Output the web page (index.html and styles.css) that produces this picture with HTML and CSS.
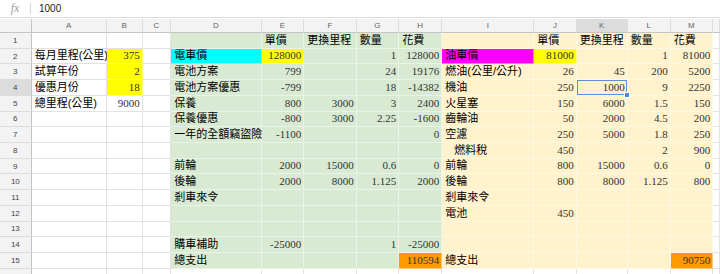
FILE: index.html
```html
<!DOCTYPE html>
<html lang="zh-Hant">
<head>
    <meta charset="UTF-8">
    <meta name="viewport" content="width=device-width, initial-scale=1.0">
    <title>電車 vs 油車 試算</title>
    <link rel="stylesheet" href="styles.css">
</head>
<body>
<div class="formula-bar">
    <span class="fx">fx</span>
    <span class="fx-sep"></span>
    <span class="fx-value">1000</span>
</div>

<div class="sheet">
    <!-- column headers -->
    <div class="row head-row">
        <div class="corner"></div>
        <div class="ch">A</div><div class="ch">B</div><div class="ch">C</div><div class="ch">D</div>
        <div class="ch">E</div><div class="ch">F</div><div class="ch">G</div><div class="ch">H</div>
        <div class="ch">I</div><div class="ch">J</div><div class="ch active">K</div><div class="ch">L</div>
        <div class="ch">M</div><div class="ch"></div>
    </div>

    <div class="row">
        <div class="rh">1</div>
        <div class="c"></div><div class="c"></div><div class="c"></div>
        <div class="c g"></div><div class="c g">單價</div><div class="c g">更換里程</div><div class="c g">數量</div><div class="c g">花費</div>
        <div class="c o"></div><div class="c o">單價</div><div class="c o">更換里程</div><div class="c o">數量</div><div class="c o">花費</div>
        <div class="c"></div>
    </div>

    <div class="row">
        <div class="rh">2</div>
        <div class="c">每月里程(公里)</div><div class="c n y">375</div><div class="c"></div>
        <div class="c cy">電車價</div><div class="c n y">128000</div><div class="c g"></div><div class="c n g">1</div><div class="c n g">128000</div>
        <div class="c mg">油車價</div><div class="c n y">81000</div><div class="c o"></div><div class="c n o">1</div><div class="c n o">81000</div>
        <div class="c"></div>
    </div>

    <div class="row">
        <div class="rh">3</div>
        <div class="c">試算年份</div><div class="c n y">2</div><div class="c"></div>
        <div class="c g">電池方案</div><div class="c n g">799</div><div class="c g"></div><div class="c n g">24</div><div class="c n g">19176</div>
        <div class="c o">燃油(公里/公升)</div><div class="c n o">26</div><div class="c n o">45</div><div class="c n o">200</div><div class="c n o">5200</div>
        <div class="c"></div>
    </div>

    <div class="row">
        <div class="rh active">4</div>
        <div class="c">優惠月份</div><div class="c n y">18</div><div class="c"></div>
        <div class="c g">電池方案優惠</div><div class="c n g">-799</div><div class="c g"></div><div class="c n g">18</div><div class="c n g">-14382</div>
        <div class="c o">機油</div><div class="c n o">250</div><div class="c n o sel">1000</div><div class="c n o">9</div><div class="c n o">2250</div>
        <div class="c"></div>
    </div>

    <div class="row">
        <div class="rh">5</div>
        <div class="c">總里程(公里)</div><div class="c n">9000</div><div class="c"></div>
        <div class="c g">保養</div><div class="c n g">800</div><div class="c n g">3000</div><div class="c n g">3</div><div class="c n g">2400</div>
        <div class="c o">火星塞</div><div class="c n o">150</div><div class="c n o">6000</div><div class="c n o">1.5</div><div class="c n o">150</div>
        <div class="c"></div>
    </div>

    <div class="row">
        <div class="rh">6</div>
        <div class="c"></div><div class="c"></div><div class="c"></div>
        <div class="c g">保養優惠</div><div class="c n g">-800</div><div class="c n g">3000</div><div class="c n g">2.25</div><div class="c n g">-1600</div>
        <div class="c o">齒輪油</div><div class="c n o">50</div><div class="c n o">2000</div><div class="c n o">4.5</div><div class="c n o">200</div>
        <div class="c"></div>
    </div>

    <div class="row">
        <div class="rh">7</div>
        <div class="c"></div><div class="c"></div><div class="c"></div>
        <div class="c g">一年的全額竊盜險</div><div class="c n g">-1100</div><div class="c g"></div><div class="c g"></div><div class="c n g">0</div>
        <div class="c o">空濾</div><div class="c n o">250</div><div class="c n o">5000</div><div class="c n o">1.8</div><div class="c n o">250</div>
        <div class="c"></div>
    </div>

    <div class="row">
        <div class="rh">8</div>
        <div class="c"></div><div class="c"></div><div class="c"></div>
        <div class="c g"></div><div class="c g"></div><div class="c g"></div><div class="c g"></div><div class="c g"></div>
        <div class="c o indent">燃料稅</div><div class="c n o">450</div><div class="c o"></div><div class="c n o">2</div><div class="c n o">900</div>
        <div class="c"></div>
    </div>

    <div class="row">
        <div class="rh">9</div>
        <div class="c"></div><div class="c"></div><div class="c"></div>
        <div class="c g">前輪</div><div class="c n g">2000</div><div class="c n g">15000</div><div class="c n g">0.6</div><div class="c n g">0</div>
        <div class="c o">前輪</div><div class="c n o">800</div><div class="c n o">15000</div><div class="c n o">0.6</div><div class="c n o">0</div>
        <div class="c"></div>
    </div>

    <div class="row">
        <div class="rh">10</div>
        <div class="c"></div><div class="c"></div><div class="c"></div>
        <div class="c g">後輪</div><div class="c n g">2000</div><div class="c n g">8000</div><div class="c n g">1.125</div><div class="c n g">2000</div>
        <div class="c o">後輪</div><div class="c n o">800</div><div class="c n o">8000</div><div class="c n o">1.125</div><div class="c n o">800</div>
        <div class="c"></div>
    </div>

    <div class="row">
        <div class="rh">11</div>
        <div class="c"></div><div class="c"></div><div class="c"></div>
        <div class="c g">剎車來令</div><div class="c g"></div><div class="c g"></div><div class="c g"></div><div class="c g"></div>
        <div class="c o">剎車來令</div><div class="c o"></div><div class="c o"></div><div class="c o"></div><div class="c o"></div>
        <div class="c"></div>
    </div>

    <div class="row">
        <div class="rh">12</div>
        <div class="c"></div><div class="c"></div><div class="c"></div>
        <div class="c g"></div><div class="c g"></div><div class="c g"></div><div class="c g"></div><div class="c g"></div>
        <div class="c o">電池</div><div class="c n o">450</div><div class="c o"></div><div class="c o"></div><div class="c o"></div>
        <div class="c"></div>
    </div>

    <div class="row">
        <div class="rh">13</div>
        <div class="c"></div><div class="c"></div><div class="c"></div>
        <div class="c g"></div><div class="c g"></div><div class="c g"></div><div class="c g"></div><div class="c g"></div>
        <div class="c o"></div><div class="c o"></div><div class="c o"></div><div class="c o"></div><div class="c o"></div>
        <div class="c"></div>
    </div>

    <div class="row">
        <div class="rh">14</div>
        <div class="c"></div><div class="c"></div><div class="c"></div>
        <div class="c g">購車補助</div><div class="c n g">-25000</div><div class="c g"></div><div class="c n g">1</div><div class="c n g">-25000</div>
        <div class="c o"></div><div class="c o"></div><div class="c o"></div><div class="c o"></div><div class="c o"></div>
        <div class="c"></div>
    </div>

    <div class="row">
        <div class="rh">15</div>
        <div class="c"></div><div class="c"></div><div class="c"></div>
        <div class="c g">總支出</div><div class="c g"></div><div class="c g"></div><div class="c g"></div><div class="c n or">110594</div>
        <div class="c o">總支出</div><div class="c o"></div><div class="c o"></div><div class="c o"></div><div class="c n or">90750</div>
        <div class="c"></div>
    </div>

    <div class="row">
        <div class="rh">16</div>
        <div class="c"></div><div class="c"></div><div class="c"></div><div class="c"></div><div class="c"></div>
        <div class="c"></div><div class="c"></div><div class="c"></div><div class="c"></div><div class="c"></div>
        <div class="c"></div><div class="c"></div><div class="c"></div><div class="c"></div>
    </div>
</div>
</body>
</html>
```

FILE: styles.css
```css
body {
    margin: 0;
    overflow: hidden;
    background: #fff;
    font-family: "Liberation Sans", Arial, sans-serif;
}

/* formula bar */
.formula-bar {
    display: flex;
    align-items: center;
    height: 17px;
    border-bottom: 1px solid #dadada;
    margin-bottom: 1px;
}

.fx {
    width: 30px;
    text-align: center;
    font-family: "Liberation Serif", serif;
    font-style: italic;
    font-size: 12px;
    color: #a0a0a0;
}

.fx-sep {
    width: 1px;
    height: 11px;
    background: #d4d4d4;
}

.fx-value {
    padding-left: 8px;
    font-size: 10px;
    color: #222;
}

/* grid */
.sheet {
    --cols: 31.7px 75px 36px 28.6px 90.4px 42.6px 52.4px 42.6px 43px 92px 42.4px 51px 43px 42.6px 1fr;
    width: 720px;
}

.row {
    display: grid;
    grid-template-columns: var(--cols);
    height: 15.73px;
}

.head-row {
    height: 14px;
}

.corner,
.ch,
.rh {
    box-sizing: border-box;
    background: #f3f3f3;
    color: #666;
    font-size: 8px;
    display: flex;
    align-items: center;
    justify-content: center;
}

.corner {
    border-right: 1px solid #c4c4c4;
    border-bottom: 1px solid #c4c4c4;
}

.ch {
    border-right: 1px solid #dcdcdc;
    border-bottom: 1px solid #c4c4c4;
}

.rh {
    border-right: 1px solid #c4c4c4;
    border-bottom: 1px solid #dcdcdc;
    color: #444;
}

.ch.active,
.rh.active {
    background: #dcdcdc;
}

.c {
    box-sizing: border-box;
    display: flex;
    align-items: flex-end;
    padding: 0 2px 1px 3px;
    border-right: 1px solid #e2e2e2;
    border-bottom: 1px solid #e2e2e2;
    font-family: "Liberation Sans", "Noto Sans CJK TC", sans-serif;
    font-size: 11px;
    line-height: 13px;
    color: #000;
    white-space: nowrap;
    min-width: 0;
}

.n {
    justify-content: flex-end;
    font-family: "Liberation Serif", serif;
    color: #333;
}

.indent {
    padding-left: 12px;
}

/* fills */
.g { background: #d9ead3; }
.o { background: #fff2cc; }
.y { background: #ffff00; }
.cy { background: #00ffff; }
.mg { background: #ff00ff; }
.or { background: #ff9900; }

.g, .o, .y, .cy, .mg, .or {
    border-color: rgba(255, 255, 255, 0.45);
}

/* selected cell */
.sel {
    position: relative;
    box-shadow: inset 0 0 0 1px #5b8fde;
}

.sel::after {
    content: '';
    position: absolute;
    right: -3px;
    bottom: -3px;
    width: 4px;
    height: 4px;
    background: #4a86e8;
    border: 1px solid #fff;
}
```
